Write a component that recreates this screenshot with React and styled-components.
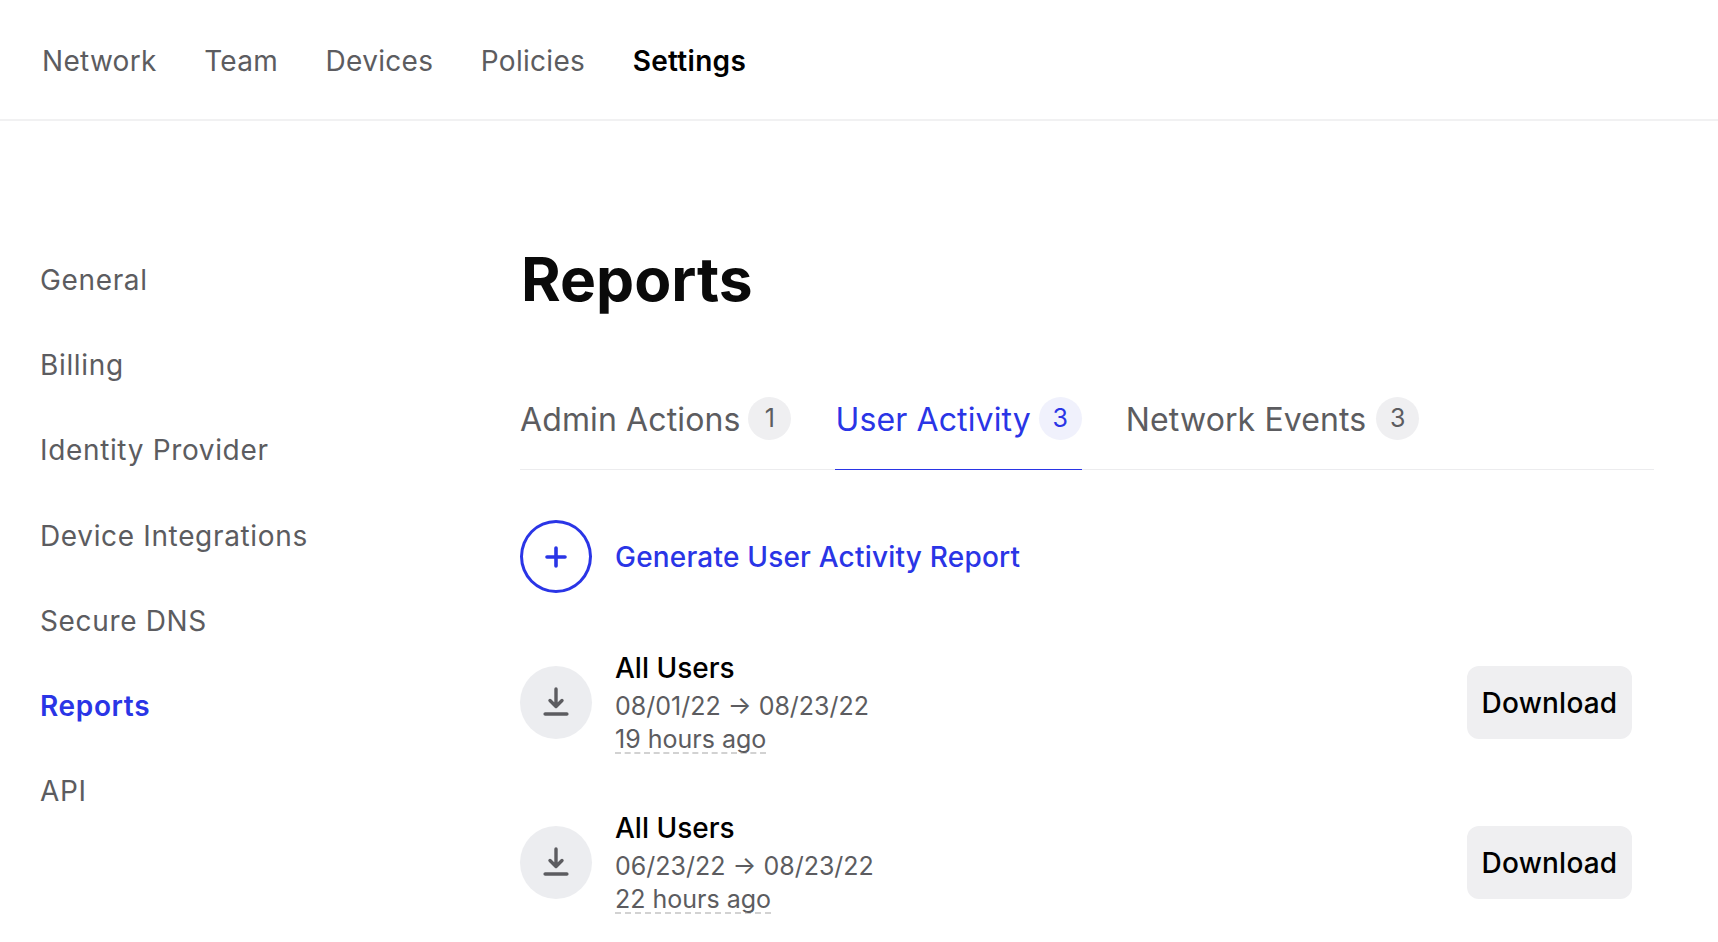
import React from "react";
import styled, { createGlobalStyle } from "styled-components";

const Global = createGlobalStyle`
  html, body { margin: 0; padding: 0; background: #fff; height: 942px; overflow: hidden; }
  body { font-family: Inter, "Liberation Sans", sans-serif; color: #5c5c60; }
`;
const Header = styled.header`
  height: 117px; padding: 2px 42px 0; border-bottom: 2px solid #f1f1f2; display: flex; align-items: center;
  gap: 47.5px; box-sizing: content-box;
`;
const NavLink = styled.a`
  font-size: 28px; letter-spacing: .3px; font-weight: ${p => (p.$active ? 600 : 400)};
  color: ${p => (p.$active ? "#000" : "#5c5c60")};
`;
const Body = styled.div`display: flex; padding: 0 64px 0 40px;`;
const Side = styled.nav`
  width: 480px; flex: none; display: flex; flex-direction: column; gap: 51px; padding-top: 142px;
`;
const SideLink = styled.a`
  font-size: 28px; line-height: 34.2px; letter-spacing: .65px;
  font-weight: ${p => (p.$active ? 600 : 400)};
  color: ${p => (p.$active ? "#2a35e6" : "#5c5c60")};
`;
const Main = styled.main`flex: 1; min-width: 0; padding-top: 123px;`;
const Title = styled.h1`
  margin: 0 0 0 1px; font-size: 60.5px; line-height: 70px; font-weight: 700; color: #0a0a0a;
`;
const Tabs = styled.div`
  display: flex; gap: 44px; margin-top: 83px; border-bottom: 1px solid #ececee;
  height: 73px; box-sizing: border-box;
`;
const Tab = styled.div`
  display: flex; align-items: flex-start; gap: ${p => p.$gap || 8}px; height: 73px; box-sizing: border-box;
  font-size: 32px; line-height: 44px; letter-spacing: .12px; padding-top: 1px;
  color: ${p => (p.$active ? "#2a35e6" : "#5c5c60")};
  border-bottom: 1px solid ${p => (p.$active ? "#2a35e6" : "transparent")};
`;
const Count = styled.span`
  width: 43px; height: 43px; margin-top: -1px; border-radius: 50%; display: flex; align-items: center; justify-content: center;
  font-size: 25px; line-height: 1;
  background: ${p => (p.$active ? "#f0f1fc" : "#efeff1")};
`;
const Generate = styled.div`display: flex; align-items: center; gap: 23px; margin-top: 50px;`;
const PlusCircle = styled.div`
  width: 72px; height: 73px; box-sizing: border-box; border: 3px solid #2a35e6; border-radius: 50%;
  display: flex; align-items: center; justify-content: center; color: #2a35e6;
`;
const GenerateText = styled.span`font-size: 28px; letter-spacing: .2px; font-weight: 500; color: #2a35e6;`;
const Row = styled.div`
  height: 160px; display: flex; align-items: center; gap: 23px; padding-right: 22px;
`;
const Rows = styled.div`margin-top: 29px;`;
const IconCircle = styled.div`
  width: 72px; height: 73px; flex: none; border-radius: 50%; background: #ecedf0; color: #5c5c60;
  display: flex; align-items: center; justify-content: center;
`;
const Info = styled.div`flex: 1; display: flex; flex-direction: column;`;
const Name = styled.div`font-size: 28px; line-height: 36px; font-weight: 500; color: #000;`;
const Dates = styled.div`font-size: 25px; line-height: 33px; margin-top: 4px;`;
const Ago = styled.span`
  font-size: 25px; line-height: 25px; align-self: flex-start; border-bottom: 2px dashed #d2d2d2; margin-top: 4px;
`;
const Button = styled.button`
  width: 165px; height: 73px; border: 0; border-radius: 12px; background: #efeff1; color: #000;
  font-family: inherit; font-size: 28px; letter-spacing: .2px; font-weight: 500; padding: 2px 0 0;
`;
const Plus = () => (
  <svg width="24" height="24" viewBox="0 0 24 24" fill="none" stroke="currentColor" strokeWidth="3.6" strokeLinecap="round"><path d="M12 3v18M3 12h18" /></svg>
);
const Dl = () => (
  <svg width="28" height="30" viewBox="0 0 28 30" fill="none" stroke="currentColor" strokeWidth="3.4" strokeLinecap="round" strokeLinejoin="round"><path d="M14 2v17.5M8 13.5l6 6 6-6" /><path d="M3.2 27h21.6" strokeWidth="3.6" /></svg>
);
const reports = [["08/01/22", "08/23/22", "19 hours ago"], ["06/23/22", "08/23/22", "22 hours ago"]];

export default function App() {
  return (
    <>
      <Global />
      <Header>
        {["Network", "Team", "Devices", "Policies"].map(n => <NavLink key={n}>{n}</NavLink>)}
        <NavLink $active>Settings</NavLink>
      </Header>
      <Body>
        <Side>
          {["General", "Billing", "Identity Provider", "Device Integrations", "Secure DNS", "Reports", "API"].map(n => (
            <SideLink key={n} $active={n === "Reports"}>{n}</SideLink>
          ))}
        </Side>
        <Main>
          <Title>Reports</Title>
          <Tabs>
            <Tab>Admin Actions <Count>1</Count></Tab>
            <Tab $active>User Activity <Count $active>3</Count></Tab>
            <Tab $gap={10}>Network Events <Count>3</Count></Tab>
          </Tabs>
          <Generate>
            <PlusCircle><Plus /></PlusCircle>
            <GenerateText>Generate User Activity Report</GenerateText>
          </Generate>
          <Rows>
            {reports.map(([a, b, c]) => (
              <Row key={a}>
                <IconCircle><Dl /></IconCircle>
                <Info>
                  <Name>All Users</Name>
                  <Dates>{a} → {b}</Dates>
                  <Ago>{c}</Ago>
                </Info>
                <Button>Download</Button>
              </Row>
            ))}
          </Rows>
        </Main>
      </Body>
    </>
  );
}
